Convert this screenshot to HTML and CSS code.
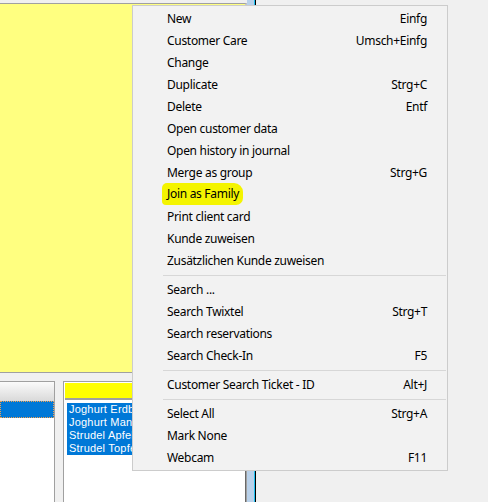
FILE: index.html
```html
<!DOCTYPE html>
<html lang="en">
<head>
    <meta charset="UTF-8">
    <title>Customer context menu</title>
    <link rel="stylesheet" href="styles.css">
</head>
<body>
    <div class="desk">
        <div class="left">
            <div class="note"></div>
            <div class="lower">
                <div class="grid-a">
                    <div class="head-a"></div>
                    <div class="row-sel"></div>
                </div>
                <div class="grid-b">
                    <div class="head-b"></div>
                    <ul class="items">
                        <li>Joghurt Erdbeere</li>
                        <li>Joghurt Mango</li>
                        <li>Strudel Apfel</li>
                        <li>Strudel Topfen</li>
                    </ul>
                </div>
            </div>
        </div>
        <div class="splitter"></div>
        <div class="rest"></div>
    </div>

    <ul class="menu">
        <li><span>New</span><span class="key">Einfg</span></li>
        <li><span>Customer Care</span><span class="key">Umsch+Einfg</span></li>
        <li><span>Change</span></li>
        <li><span>Duplicate</span><span class="key">Strg+C</span></li>
        <li><span>Delete</span><span class="key">Entf</span></li>
        <li><span>Open customer data</span></li>
        <li><span>Open history in journal</span></li>
        <li><span>Merge as group</span><span class="key">Strg+G</span></li>
        <li><span class="marker">Join as Family</span></li>
        <li><span>Print client card</span></li>
        <li><span>Kunde zuweisen</span></li>
        <li><span>Zusätzlichen Kunde zuweisen</span></li>
        <li class="sep"></li>
        <li><span>Search ...</span></li>
        <li><span>Search Twixtel</span><span class="key">Strg+T</span></li>
        <li><span>Search reservations</span></li>
        <li><span>Search Check-In</span><span class="key">F5</span></li>
        <li class="sep"></li>
        <li><span>Customer Search Ticket - ID</span><span class="key">Alt+J</span></li>
        <li class="sep"></li>
        <li><span>Select All</span><span class="key">Strg+A</span></li>
        <li><span>Mark None</span></li>
        <li><span>Webcam</span><span class="key">F11</span></li>
    </ul>
</body>
</html>
```

FILE: styles.css
```css
*{
    margin: 0;
    padding: 0;
    box-sizing: border-box;
    list-style: none;
}

body{
    width: 488px;
    height: 502px;
    overflow: hidden;
    position: relative;
    background-color: #f0f0f0;
    font-family: "Noto Sans", "Open Sans", sans-serif;
    font-size: 12px;
    letter-spacing: -0.3px;
    color: #000;
}

.desk{
    display: flex;
    height: 502px;
}

.left{
    width: 247px;
    display: flex;
    flex-direction: column;
    padding-top: 3px;
}

.note{
    height: 370px;
    background-color: #ffff80;
    border-top: 1px solid #a0a0a0;
    border-bottom: 1px solid #a0a0a0;
    border-right: 2px solid #c8c8c8;
}

.lower{
    flex: 1;
    display: flex;
    gap: 8px;
    padding-top: 8px;
}

.grid-a{
    width: 55px;
    background-color: #fff;
    border-top: 1px solid #a0a0a0;
    border-right: 1px solid #a0a0a0;
}

.head-a{
    height: 19px;
    background: linear-gradient(#fbfbfb, #d9d9d9);
}

.row-sel{
    height: 17px;
    background-color: #0078d7;
    outline: 1px dotted #f0a050;
    outline-offset: -1px;
}

.grid-b{
    flex: 1;
    background-color: #fff;
    border-top: 1px solid #a0a0a0;
    border-left: 1px solid #a0a0a0;
    border-right: 1px solid #a0a0a0;
    box-shadow: inset -1px 0 0 #696969;
    padding: 1px 0 0 1px;
}

.head-b{
    height: 17px;
    background-color: #ffff00;
    border-bottom: 2px solid #a0a0a0;
    margin-right: 1px;
}

.items{
    padding: 3px 0 0 2px;
}

.items li{
    height: 13px;
    line-height: 13px;
    font-family: "Liberation Sans", Arial, sans-serif;
    font-size: 11px;
    letter-spacing: 0.2px;
    background-color: #0078d7;
    color: #fff;
    padding-left: 2px;
    white-space: nowrap;
    overflow: hidden;
}

.splitter{
    width: 9px;
    background: linear-gradient(to right, #b9d1ea 7px, #1ec0f0 7px 8px, #000 8px);
}

.rest{
    flex: 1;
}

/* context menu floats over the form */
.menu{
    position: absolute;
    left: 132px;
    top: 5px;
    width: 316px;
    background-color: #f2f2f2;
    border: 1px solid #cccccc;
    padding: 1px 0 2px;
}

.menu li{
    display: flex;
    justify-content: space-between;
    align-items: center;
    height: 22px;
    padding: 0 20px 0 34px;
    white-space: nowrap;
}

.menu li.sep{
    height: 7px;
    padding: 0;
    margin: 0 1px 0 30px;
    display: block;
    border-top: 4px solid transparent;
    background-clip: padding-box;
}

.menu li.sep::after{
    content: "";
    display: block;
    height: 1px;
    background-color: #d7d7d7;
}

.marker{
    display: inline-block;
    height: 22px;
    line-height: 22px;
    padding: 0 4px 0 5px;
    margin-left: -5px;
    background-color: #f4f400;
    border-radius: 5px 9px 7px 4px;
}
```
